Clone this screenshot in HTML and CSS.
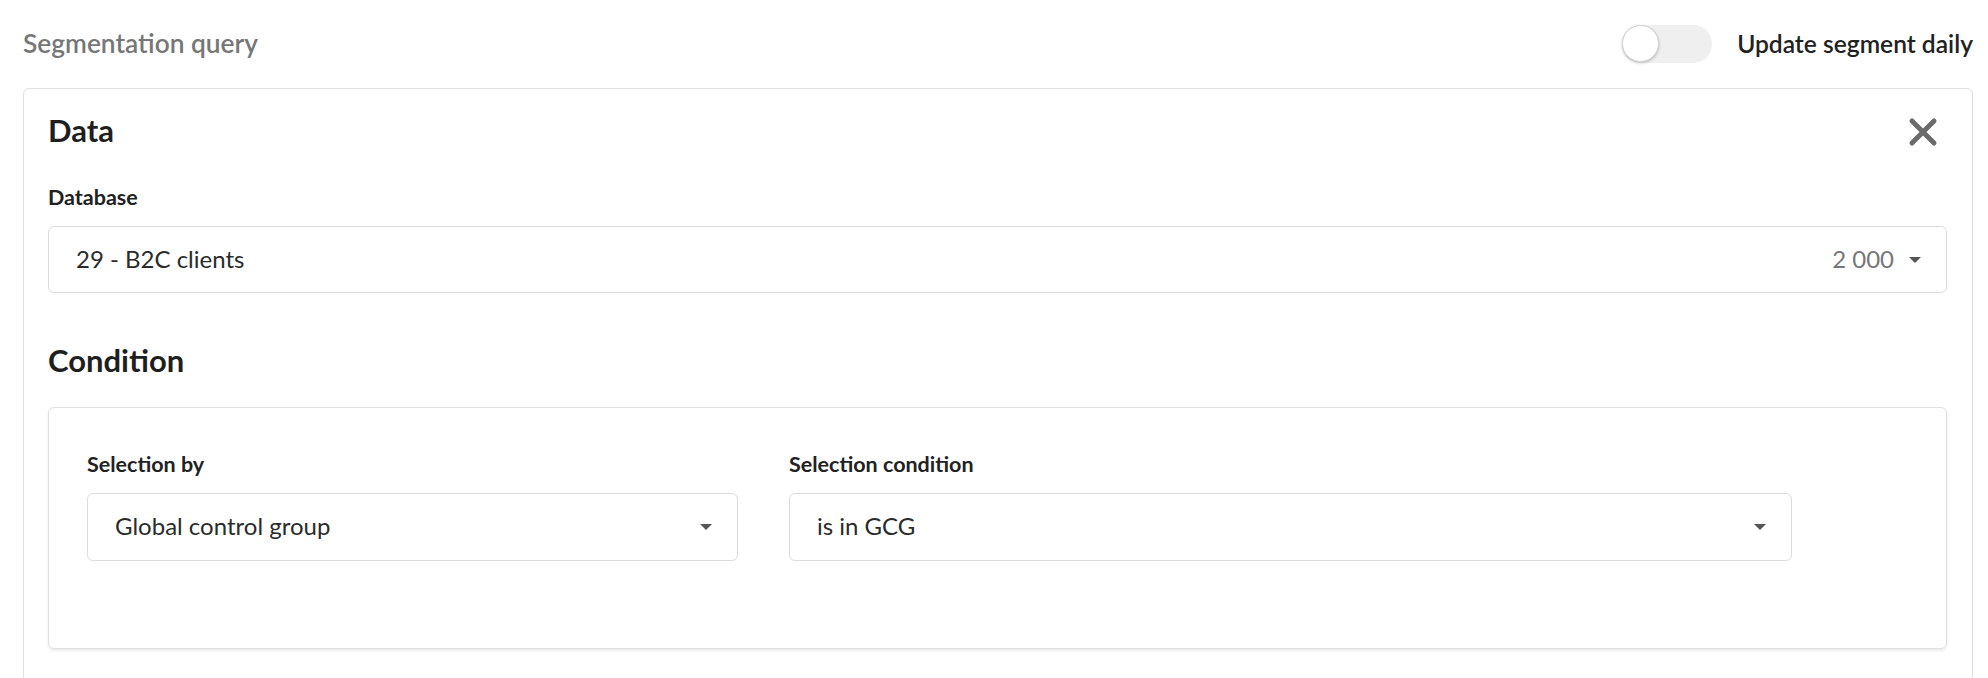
FILE: index.html
```html
<!DOCTYPE html>
<html lang="en">
<head>
    <meta charset="UTF-8">
    <meta name="viewport" content="width=device-width, initial-scale=1.0">
    <title>Segmentation query</title>
    <link rel="stylesheet" href="styles.css">
</head>
<body>

    <div class="query-head">
        <h2 class="query-title">Segmentation query</h2>
        <label class="switch-row">
            <span class="switch"><span class="switch-knob"></span></span>
            <span class="switch-label">Update segment daily</span>
        </label>
    </div>

    <section class="card">
        <div class="card-head">
            <h3 class="card-title">Data</h3>
            <button class="icon-btn close-lg" title="Remove">
                <svg viewBox="0 0 30 30" width="30" height="30"><path d="M4 4 26 26M26 4 4 26"/></svg>
            </button>
        </div>

        <div class="field-label">Database</div>
        <div class="select">
            <span class="select-value">29 - B2C clients</span>
            <span class="select-count">2 000</span>
            <span class="caret"></span>
        </div>

        <h3 class="card-title condition-title">Condition</h3>

        <div class="condition">
            <div class="field">
                <div class="field-label">Selection by</div>
                <div class="select">
                    <span class="select-value">Global control group</span>
                    <span class="caret"></span>
                </div>
            </div>
            <div class="field">
                <div class="field-label">Selection condition</div>
                <div class="select">
                    <span class="select-value">is in GCG</span>
                    <span class="caret"></span>
                </div>
            </div>
            <button class="icon-btn close-sm" title="Remove condition">
                <svg viewBox="0 0 24 24" width="24" height="24"><path d="M3 3 21 21M21 3 3 21"/></svg>
            </button>
        </div>
    </section>

</body>
</html>
```

FILE: styles.css
```css
body {
    margin: 0;
    font-family: Lato, "Open Sans", sans-serif;
    background-color: #fff;
    color: #222;
}
.query-head {
    display: flex;
    align-items: center;
    justify-content: space-between;
    height: 88px;
    padding: 0 15px 0 23px;
}
.query-title {
    margin: 0;
    font-size: 26.3px;
    font-weight: 600;
    line-height: 1.2;
    color: #777;
}
.switch-row {
    display: flex;
    align-items: center;
    cursor: pointer;
}
.switch {
    position: relative;
    width: 90px;
    height: 38px;
    border-radius: 19px;
    background-color: #efefef;
    margin-right: 25px;
}
.switch-knob {
    position: absolute;
    left: 0;
    top: 0;
    width: 37px;
    height: 37px;
    box-sizing: border-box;
    border-radius: 50%;
    background-color: #fff;
    border: 1px solid #d4d4d4;
    box-shadow: 0 1px 3px rgba(0, 0, 0, 0.25);
}
.switch-label {
    font-size: 24.6px;
    font-weight: 600;
    line-height: 1.2;
    color: #222;
}
.card {
    margin: 0 15px 0 23px;
    border: 1px solid #e0e0e0;
    border-radius: 6px;
    padding: 22px 25px 60px 24px;
}
.card-head {
    display: flex;
    align-items: center;
    justify-content: space-between;
}
.card-title {
    margin: 0;
    font-size: 31px;
    font-weight: 700;
    line-height: 38px;
    color: #1f1f1f;
}
.icon-btn {
    border: none;
    background: none;
    padding: 0;
    cursor: pointer;
    display: flex;
}
.icon-btn svg {
    fill: none;
    stroke-linecap: round;
}
.close-lg {
    margin-right: 9px;
    margin-top: 4px;
}
.close-lg svg {
    stroke: #6b6b6b;
    stroke-width: 5;
}
.close-sm svg {
    stroke: #8c8c8c;
    stroke-width: 3.8;
}
.field-label {
    font-size: 21.5px;
    font-weight: 700;
    line-height: 26px;
    color: #222;
    margin-top: 35px;
    margin-bottom: 16px;
}
.select {
    display: flex;
    align-items: center;
    box-sizing: border-box;
    height: 67px;
    border: 1px solid #dcdcdc;
    border-radius: 6px;
    padding: 0 25px 3px 27px;
    font-size: 24px;
    color: #2b2b2b;
}
.select-value {
    flex: 1;
}
.select-count {
    color: #777;
    margin-right: 15px;
}
.caret {
    width: 0;
    height: 0;
    margin-top: 3px;
    border-left: 6.5px solid transparent;
    border-right: 6.5px solid transparent;
    border-top: 6.5px solid #555;
}
.condition-title {
    margin-top: 48px;
}
.condition {
    display: grid;
    grid-template-columns: 651px 1003px 24px;
    column-gap: 51px;
    align-items: start;
    margin-top: 28px;
    border: 1px solid #e0e0e0;
    border-radius: 6px;
    box-shadow: 0 2px 3px rgba(0, 0, 0, 0.08);
    padding: 43px 20px 87px 38px;
}
.condition .field-label {
    margin-top: 0;
}
.condition .select {
    height: 68px;
}
.close-sm {
    margin-left: 32px;
    margin-top: 4px;
}
```
